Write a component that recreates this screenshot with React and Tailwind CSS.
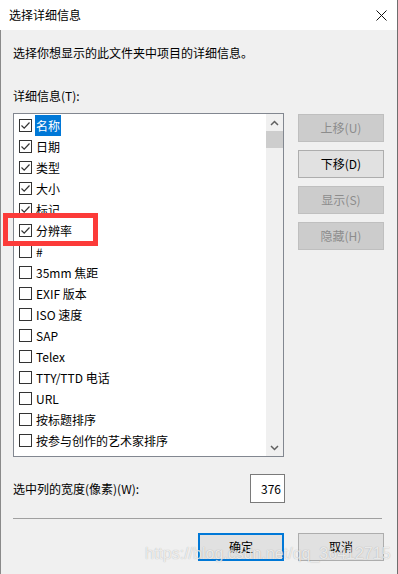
import React from "react";

const rows = [
  ["名称", true],
  ["日期", true],
  ["类型", true],
  ["大小", true],
  ["标记", true],
  ["分辨率", true],
  ["#", false],
  ["35mm 焦距", false],
  ["EXIF 版本", false],
  ["ISO 速度", false],
  ["SAP", false],
  ["Telex", false],
  ["TTY/TTD 电话", false],
  ["URL", false],
  ["按标题排序", false],
  ["按参与创作的艺术家排序", false],
];

function Check({ checked }) {
  return (
    <div className="w-[13px] h-[13px] border border-[#333333] bg-white flex items-center justify-center shrink-0">
      {checked && (
        <svg width="11" height="11" viewBox="0 0 11 11">
          <path d="M1.5 5.5 L4.2 8.2 L9.5 2.5" fill="none" stroke="#333333" strokeWidth="1.2" />
        </svg>
      )}
    </div>
  );
}

function Btn({ children, disabled, primary }) {
  return (
    <div
      className={
        "w-[86px] h-[28px] flex items-center justify-center text-[12px] leading-none " +
        (disabled
          ? "bg-[#cccccc] border border-[#bfbfbf] text-[#8c8c8c]"
          : primary
          ? "bg-[#e1e1e1] border-2 border-[#0078d7] text-black"
          : "bg-[#e1e1e1] border border-[#adadad] text-black")
      }
    >
      {children}
    </div>
  );
}

export default function App() {
  return (
    <div
      className="relative w-[398px] h-[574px] bg-[#f0f0f0] overflow-hidden text-black"
      style={{ fontFamily: '"Noto Sans CJK SC", "Noto Sans", sans-serif' }}
    >
      <div className="flex flex-col h-full border-r border-[#6e6e6e]">
        {/* title bar */}
        <div className="h-[30px] bg-white flex items-center justify-between pl-[9px] pr-[10px] shrink-0">
          <span className="text-[12px] leading-none">选择详细信息</span>
          <svg width="11" height="11" viewBox="0 0 11 11">
            <path d="M0.5 0.5 L10.5 10.5 M10.5 0.5 L0.5 10.5" stroke="#111" strokeWidth="1" />
          </svg>
        </div>
        {/* body */}
        <div className="flex-1 flex flex-col border-l border-[#8a8a8a] pl-[12px] pr-[13px]">
          <div className="mt-[15px] h-[16px] text-[12px] leading-[16px]">选择你想显示的此文件夹中项目的详细信息。</div>
          <div className="mt-[27px] h-[16px] text-[12px] leading-[16px]">详细信息(T):</div>
          <div className="mt-[9px] flex gap-[14px]">
            {/* list */}
            <div className="w-[271px] h-[344px] border border-[#828790] bg-white flex">
              <div className="flex-1 pt-[1px] flex flex-col">
                {rows.map(([label, checked], i) => (
                  <div key={i} className="h-[21px] flex items-center pl-[5px]">
                    <Check checked={checked} />
                    <span
                      className={
                        "ml-[3px] h-[21px] flex items-center px-[1px] text-[12px] leading-none " +
                        (i === 0 ? "bg-[#0078d7] text-white" : "")
                      }
                    >
                      {label}
                    </span>
                  </div>
                ))}
              </div>
              <div className="w-[17px] bg-[#f0f0f0] flex flex-col">
                <div className="h-[17px] flex items-center justify-center">
                  <svg width="9" height="6" viewBox="0 0 9 6">
                    <path d="M1 5 L4.5 1.5 L8 5" fill="none" stroke="#606060" strokeWidth="1.5" />
                  </svg>
                </div>
                <div className="h-[17px] bg-[#cdcdcd]" />
                <div className="flex-1" />
                <div className="h-[17px] flex items-center justify-center">
                  <svg width="9" height="6" viewBox="0 0 9 6">
                    <path d="M1 1 L4.5 4.5 L8 1" fill="none" stroke="#606060" strokeWidth="1.5" />
                  </svg>
                </div>
              </div>
            </div>
            {/* side buttons */}
            <div className="flex flex-col gap-[8px] pt-[1px]">
              <Btn disabled>上移(U)</Btn>
              <Btn>下移(D)</Btn>
              <Btn disabled>显示(S)</Btn>
              <Btn disabled>隐藏(H)</Btn>
            </div>
          </div>
          <div className="mt-[17px] flex items-center">
            <span className="w-[237px] text-[12px] leading-none">选中列的宽度(像素)(W):</span>
            <div className="w-[35px] h-[29px] border border-[#7a7a7a] bg-white flex items-center justify-end pr-[3px] text-[12px] leading-none">
              376
            </div>
          </div>
          <div className="mt-[15px] w-[369px] h-[1px] bg-[#a0a0a0]" />
          <div className="mt-[14px] flex justify-end gap-[14px]">
            <Btn primary>确定</Btn>
            <Btn>取消</Btn>
          </div>
        </div>
      </div>
      {/* red highlight box */}
      <div className="absolute left-[3px] top-[213px] w-[95px] h-[33px] border-[5px] border-[#fc3b39]" />
      {/* watermark */}
      <div
        className="absolute left-[145px] top-[546px] text-[16px] leading-none text-white/75 pointer-events-none"
        style={{ fontFamily: '"Liberation Sans", Arial, sans-serif', textShadow: "0 0 1px rgba(0,0,0,0.3)" }}
      >
        https://blog.csdn.net/qq_36412715
      </div>
    </div>
  );
}
